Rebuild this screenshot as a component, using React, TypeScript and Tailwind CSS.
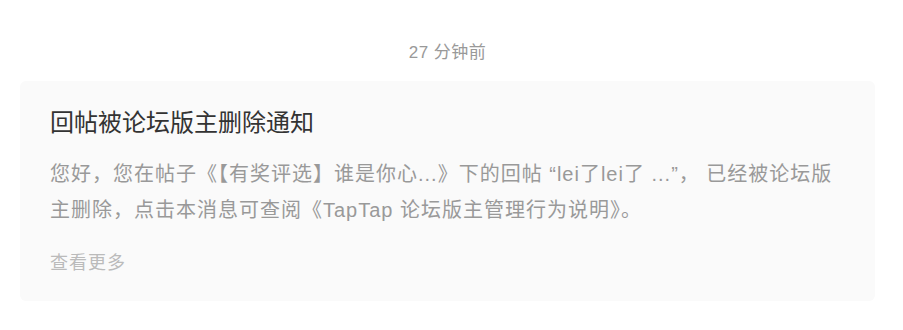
import React from "react";

const font = { fontFamily: '"Liberation Sans", "Noto Sans CJK SC", sans-serif' };

export default function App() {
  return (
    <div className="w-[903px] h-[330px] bg-white" style={font}>
      <div className="w-[855px] ml-[20px] pt-[42px]">
        <div className="text-center text-[17px] leading-[22px] text-[#999999] tracking-[0.5px]">27 分钟前</div>
        <div className="mt-[17px] rounded-[6px] bg-[#fafafa] pl-[30px] pr-[30px] pt-[25px] pb-[24px]">
          <div className="text-[24px] leading-[33px] text-[#333333]">回帖被论坛版主删除通知</div>
          <div className="mt-[17px] text-[20px] leading-[36px] text-[#999999] tracking-[1px]">
            您好，您在帖子《【有奖评选】谁是你心...》下的回帖 “lei了lei了 ...”， 已经被论坛版主删除，点击本消息可查阅《TapTap 论坛版主管理行为说明》。
          </div>
          <div className="mt-[21px] text-[18px] leading-[28px] text-[#bbbbbb] tracking-[1px]">查看更多</div>
        </div>
      </div>
    </div>
  );
}
